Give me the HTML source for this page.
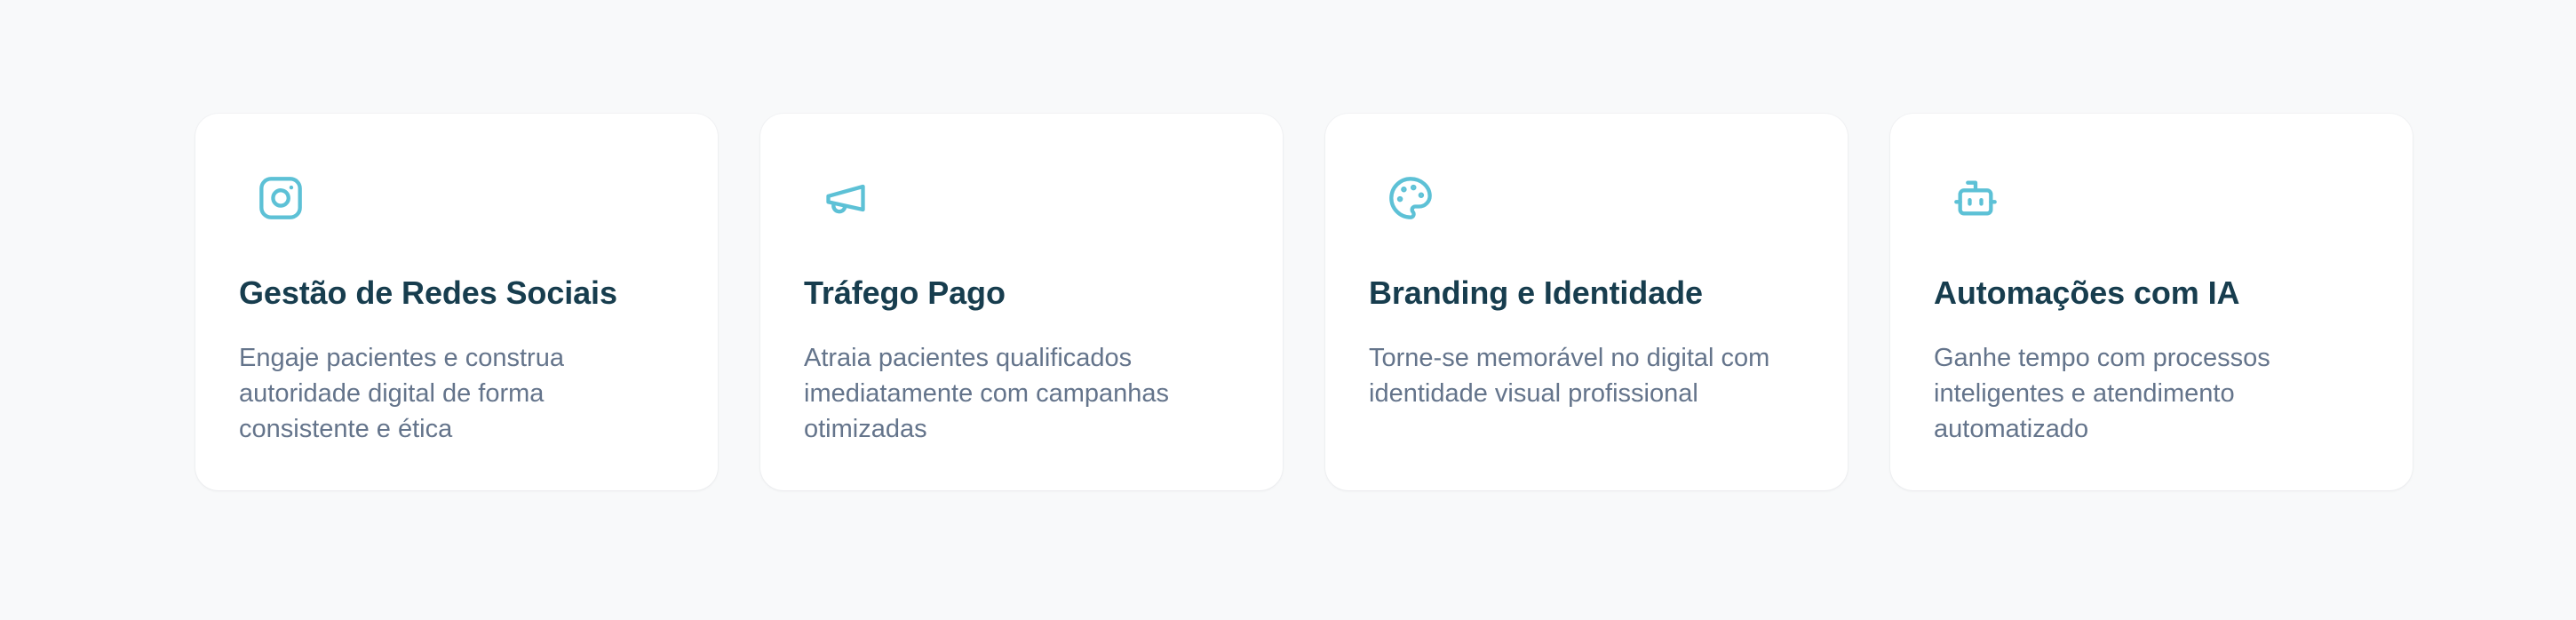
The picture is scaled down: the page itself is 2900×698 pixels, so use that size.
<!DOCTYPE html>
<html><head><meta charset="utf-8"><style>
html,body{margin:0;padding:0}
body{width:2900px;height:698px;background:#f8f9fa;position:relative;overflow:hidden;font-family:"Liberation Sans",sans-serif}
.card{position:absolute;top:128px;width:588px;height:424px;background:#fff;border-radius:26px;box-shadow:0 1px 3px rgba(15,23,42,0.05),0 0 0 1px rgba(15,23,42,0.02)}
.card svg{position:absolute;left:70px;top:197px;margin-top:-128px}
.t{position:absolute;left:49px;top:184px;font-size:36px;line-height:36px;font-weight:700;color:#173d4e;white-space:nowrap;letter-spacing:-0.1px}
.d{position:absolute;left:49px;top:255px;font-size:29px;line-height:40px;color:#64748b;white-space:nowrap}
</style></head><body>
<div class="card" style="left:220px">
<svg width="52" height="52" viewBox="0 0 24 24" fill="none" stroke="#5dc1d6" stroke-width="2" stroke-linecap="round" stroke-linejoin="round"><rect x="2" y="2" width="20" height="20" rx="5"/><path d="M16 11.37A4 4 0 1 1 12.63 8 4 4 0 0 1 16 11.37z"/><line x1="17.5" y1="6.5" x2="17.51" y2="6.5"/></svg>
<div class="t">Gestão de Redes Sociais</div>
<div class="d">Engaje pacientes e construa<br>autoridade digital de forma<br>consistente e ética</div>
</div>
<div class="card" style="left:856px">
<svg width="52" height="52" viewBox="0 0 24 24" fill="none" stroke="#5dc1d6" stroke-width="2" stroke-linecap="round" stroke-linejoin="round"><path d="m3 11 18-5v12L3 14v-3z"/><path d="M11.6 16.8a3 3 0 1 1-5.8-1.6"/></svg>
<div class="t">Tráfego Pago</div>
<div class="d">Atraia pacientes qualificados<br>imediatamente com campanhas<br>otimizadas</div>
</div>
<div class="card" style="left:1492px">
<svg width="52" height="52" viewBox="0 0 24 24" fill="none" stroke="#5dc1d6" stroke-width="2" stroke-linecap="round" stroke-linejoin="round"><circle cx="13.5" cy="6.5" r=".5" fill="#5dc1d6"/><circle cx="17.5" cy="10.5" r=".5" fill="#5dc1d6"/><circle cx="8.5" cy="7.5" r=".5" fill="#5dc1d6"/><circle cx="6.5" cy="12.5" r=".5" fill="#5dc1d6"/><path d="M12 2C6.5 2 2 6.5 2 12s4.5 10 10 10c.926 0 1.648-.746 1.648-1.688 0-.437-.18-.835-.437-1.125-.29-.289-.438-.652-.438-1.125a1.64 1.64 0 0 1 1.668-1.668h1.996c3.051 0 5.555-2.503 5.555-5.554C21.965 6.012 17.461 2 12 2z"/></svg>
<div class="t">Branding e Identidade</div>
<div class="d">Torne-se memorável no digital com<br>identidade visual profissional</div>
</div>
<div class="card" style="left:2128px">
<svg width="52" height="52" viewBox="0 0 24 24" fill="none" stroke="#5dc1d6" stroke-width="2" stroke-linecap="round" stroke-linejoin="round"><path d="M12 8V4H8"/><rect x="4" y="8" width="16" height="12" rx="2"/><path d="M2 14h2"/><path d="M20 14h2"/><path d="M15 13v2"/><path d="M9 13v2"/></svg>
<div class="t">Automações com IA</div>
<div class="d">Ganhe tempo com processos<br>inteligentes e atendimento<br>automatizado</div>
</div>
</body></html>
